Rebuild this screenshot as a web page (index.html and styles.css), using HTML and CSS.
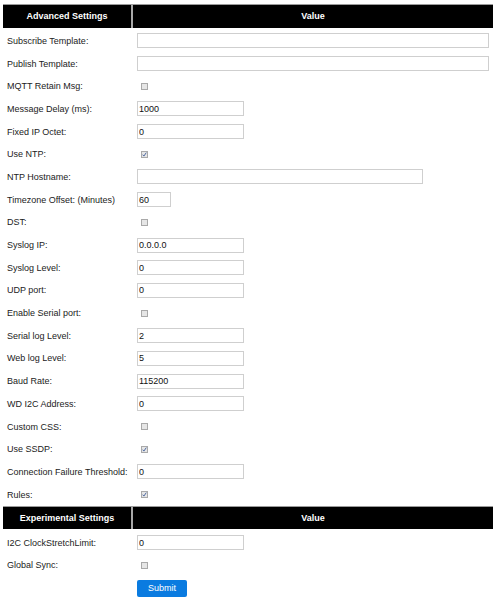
FILE: index.html
```html
<!DOCTYPE html>
<html>
<head>
<meta charset="utf-8">
<link rel="stylesheet" href="styles.css">
</head>
<body>
<div class="page">
  <div class="head"><div class="hc">Advanced Settings</div><div class="hc">Value</div></div>
  <div class="rows">
    <div class="row"><div class="lab">Subscribe Template:</div><div class="val"><input class="in w352" type="text" value=""></div></div>
    <div class="row"><div class="lab">Publish Template:</div><div class="val"><input class="in w352" type="text" value=""></div></div>
    <div class="row"><div class="lab">MQTT Retain Msg:</div><div class="val"><svg class="cb" viewBox="0 0 7 7" width="7" height="7"><rect x="0.5" y="0.5" width="6" height="6" fill="#e6e6e6" stroke="#a9a9a9"/></svg></div></div>
    <div class="row"><div class="lab">Message Delay (ms):</div><div class="val"><input class="in w107" type="text" value="1000"></div></div>
    <div class="row"><div class="lab">Fixed IP Octet:</div><div class="val"><input class="in w107" type="text" value="0"></div></div>
    <div class="row"><div class="lab">Use NTP:</div><div class="val"><svg class="cb" viewBox="0 0 7 7" width="7" height="7"><rect x="0.5" y="0.5" width="6" height="6" fill="#e6e6e6" stroke="#a9a9a9"/><path d="M1.7 3.7 L2.9 5.1 L5.3 1.6" fill="none" stroke="#3e5c9a" stroke-width="0.9"/></svg></div></div>
    <div class="row"><div class="lab">NTP Hostname:</div><div class="val"><input class="in w286" type="text" value=""></div></div>
    <div class="row"><div class="lab">Timezone Offset: (Minutes)</div><div class="val"><input class="in w34" type="text" value="60"></div></div>
    <div class="row"><div class="lab">DST:</div><div class="val"><svg class="cb" viewBox="0 0 7 7" width="7" height="7"><rect x="0.5" y="0.5" width="6" height="6" fill="#e6e6e6" stroke="#a9a9a9"/></svg></div></div>
    <div class="row"><div class="lab">Syslog IP:</div><div class="val"><input class="in w107" type="text" value="0.0.0.0"></div></div>
    <div class="row"><div class="lab">Syslog Level:</div><div class="val"><input class="in w107" type="text" value="0"></div></div>
    <div class="row"><div class="lab">UDP port:</div><div class="val"><input class="in w107" type="text" value="0"></div></div>
    <div class="row"><div class="lab">Enable Serial port:</div><div class="val"><svg class="cb" viewBox="0 0 7 7" width="7" height="7"><rect x="0.5" y="0.5" width="6" height="6" fill="#e6e6e6" stroke="#a9a9a9"/></svg></div></div>
    <div class="row"><div class="lab">Serial log Level:</div><div class="val"><input class="in w107" type="text" value="2"></div></div>
    <div class="row"><div class="lab">Web log Level:</div><div class="val"><input class="in w107" type="text" value="5"></div></div>
    <div class="row"><div class="lab">Baud Rate:</div><div class="val"><input class="in w107" type="text" value="115200"></div></div>
    <div class="row"><div class="lab">WD I2C Address:</div><div class="val"><input class="in w107" type="text" value="0"></div></div>
    <div class="row"><div class="lab">Custom CSS:</div><div class="val"><svg class="cb" viewBox="0 0 7 7" width="7" height="7"><rect x="0.5" y="0.5" width="6" height="6" fill="#e6e6e6" stroke="#a9a9a9"/></svg></div></div>
    <div class="row"><div class="lab">Use SSDP:</div><div class="val"><svg class="cb" viewBox="0 0 7 7" width="7" height="7"><rect x="0.5" y="0.5" width="6" height="6" fill="#e6e6e6" stroke="#a9a9a9"/><path d="M1.7 3.7 L2.9 5.1 L5.3 1.6" fill="none" stroke="#3e5c9a" stroke-width="0.9"/></svg></div></div>
    <div class="row"><div class="lab">Connection Failure Threshold:</div><div class="val"><input class="in w107" type="text" value="0"></div></div>
    <div class="row"><div class="lab">Rules:</div><div class="val"><svg class="cb" viewBox="0 0 7 7" width="7" height="7"><rect x="0.5" y="0.5" width="6" height="6" fill="#e6e6e6" stroke="#a9a9a9"/><path d="M1.7 3.7 L2.9 5.1 L5.3 1.6" fill="none" stroke="#3e5c9a" stroke-width="0.9"/></svg></div></div>
  </div>
  <div class="head"><div class="hc">Experimental Settings</div><div class="hc">Value</div></div>
  <div class="rows">
    <div class="row"><div class="lab">I2C ClockStretchLimit:</div><div class="val"><input class="in w107" type="text" value="0"></div></div>
    <div class="row"><div class="lab">Global Sync:</div><div class="val"><svg class="cb" viewBox="0 0 7 7" width="7" height="7"><rect x="0.5" y="0.5" width="6" height="6" fill="#e6e6e6" stroke="#a9a9a9"/></svg></div></div>
    <div class="row"><div class="lab"></div><div class="val"><button class="btn" type="button">Submit</button></div></div>
  </div>
</div>
</body>
</html>
```

FILE: styles.css
```css
html, body {
  margin: 0;
  padding: 0;
  background: #fff;
}
body {
  font-family: "Liberation Sans", Arial, sans-serif;
  font-size: 9px;
  color: #222;
}
.page {
  padding: 4px 0 0 3px;
  width: 490px;
}
.head {
  display: grid;
  grid-template-columns: 128px 360px;
  column-gap: 2px;
  background: #a8a8a8;
  border-top: 1px solid #9a9a9a;
}
.hc {
  background: #000;
  color: #fff;
  font-weight: bold;
  height: 22.5px;
  display: flex;
  align-items: center;
  justify-content: center;
}
.rows {
  padding-top: 2px;
}
.row {
  display: grid;
  grid-template-columns: 128px 360px;
  column-gap: 2px;
  height: 22.7px;
  align-items: center;
}
.lab {
  padding-left: 4px;
  white-space: nowrap;
}
.val {
  padding-left: 4px;
  display: flex;
  align-items: center;
}
.in {
  box-sizing: border-box;
  height: 15px;
  margin: 0;
  padding: 0 1px;
  border: 1px solid #cfcfcf;
  font-family: "Liberation Sans", Arial, sans-serif;
  font-size: 9px;
  color: #111;
  background: #fff;
  outline: none;
}
.w352 { width: 352px; }
.w286 { width: 286px; }
.w107 { width: 107px; }
.w34 { width: 34px; }
.cb {
  display: block;
  margin-left: 4px;
}
.btn {
  box-sizing: border-box;
  width: 50px;
  height: 17px;
  margin: 0;
  padding: 0;
  border: none;
  border-radius: 2px;
  background: #0a7be0;
  color: #fff;
  font-family: "Liberation Sans", Arial, sans-serif;
  font-size: 9px;
}
```
